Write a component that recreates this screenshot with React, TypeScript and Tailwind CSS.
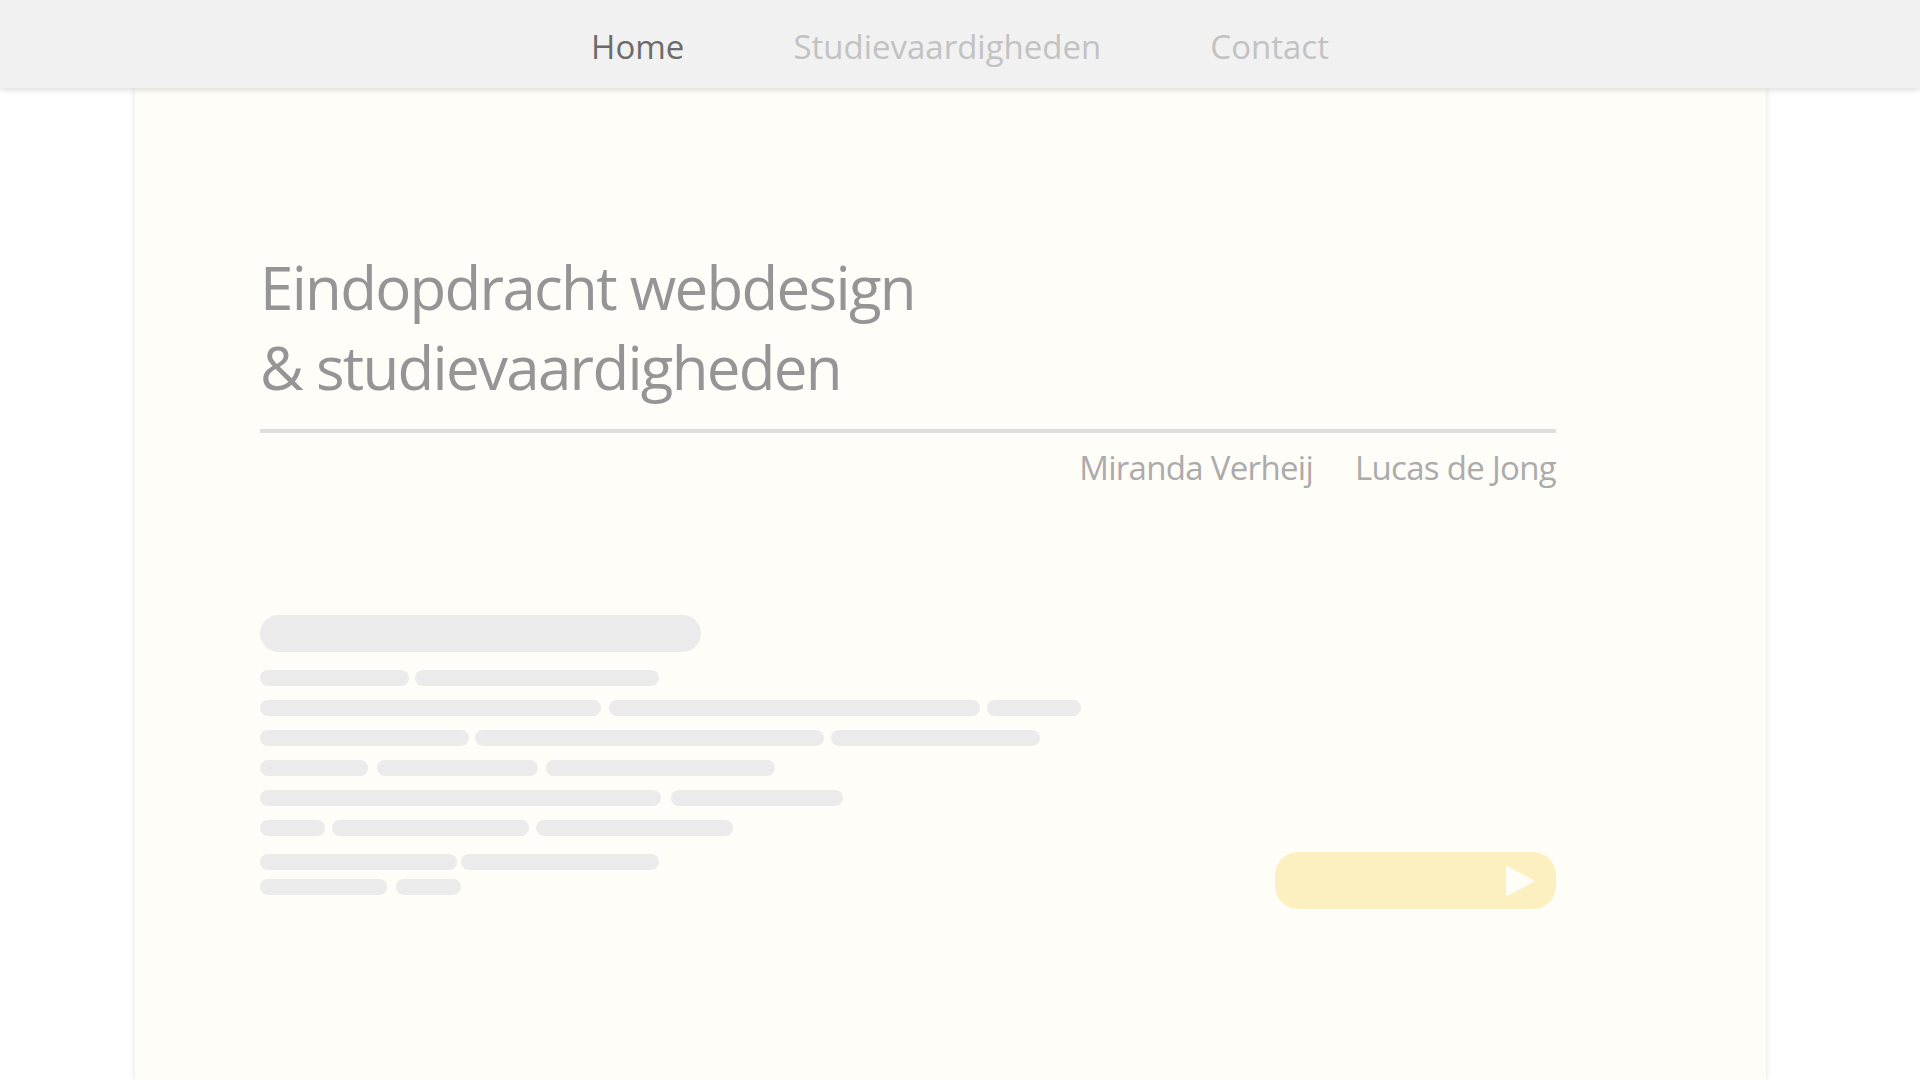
const rows: { w: number[]; g: number[] }[] = [
  { w: [149, 244], g: [6] },
  { w: [341, 371, 94], g: [8, 7] },
  { w: [209, 349, 209], g: [6, 7] },
  { w: [108, 161, 229], g: [9, 8] },
  { w: [401, 172], g: [10] },
  { w: [65, 197, 197], g: [7, 7] },
];

const rows2: { w: number[]; g: number[] }[] = [
  { w: [197, 198], g: [4] },
  { w: [127, 65], g: [9] },
];

function SkeletonRow({ w, g }: { w: number[]; g: number[] }) {
  return (
    <div className="flex">
      {w.map((width, i) => (
        <div
          key={i}
          className="h-[16px] rounded-full bg-[#ebebec]"
          style={{ width, marginLeft: i === 0 ? 0 : g[i - 1] }}
        />
      ))}
    </div>
  );
}

export default function App() {
  return (
    <div className="min-h-screen bg-white font-['Open_Sans','Noto_Sans',sans-serif]">
      <nav className="relative z-10 flex h-[88px] items-center justify-center gap-[109px] bg-[#f1f1f1] pt-[5px] text-[33px] leading-[40px] shadow-[0_2px_6px_rgba(0,0,0,0.14)]">
        <a className="text-[#6b6b6b]">Home</a>
        <a className="text-[#c2c2c2]">Studievaardigheden</a>
        <a className="text-[#c2c2c2]">Contact</a>
      </nav>

      <main className="ml-[135px] min-h-[992px] w-[1631px] bg-[#fffdf8] pl-[125px] pt-[159px] shadow-[0_0_6px_rgba(0,0,0,0.13)]">
        <div className="w-[1296px]">
          <h1 className="text-[60px] font-normal leading-[80px] tracking-[-1.7px] text-[#959595]">
            Eindopdracht webdesign
            <br />& studievaardigheden
          </h1>
          <div className="mt-[22px] h-[4px] bg-[#dddddd]" />
          <div className="mt-[15px] flex justify-end gap-[42px] text-[33px] leading-[40px] tracking-[-0.7px] text-[#ababab]">
            <span>Miranda Verheij</span>
            <span>Lucas de Jong</span>
          </div>

          <div className="mt-[127px] flex items-end justify-between">
            <div className="pb-[14px]">
              <div className="h-[37px] w-[441px] rounded-full bg-[#ebebec]" />
              <div className="mt-[18px] flex flex-col gap-[14px]">
                {rows.map((r, i) => (
                  <SkeletonRow key={i} w={r.w} g={r.g} />
                ))}
              </div>
              <div className="mt-[18px] flex flex-col gap-[9px]">
                {rows2.map((r, i) => (
                  <SkeletonRow key={i} w={r.w} g={r.g} />
                ))}
              </div>
            </div>

            <button className="flex h-[57px] w-[281px] items-center justify-end rounded-[23px] bg-[#fdf0c0] pr-[21px]">
              <svg width="30" height="34" viewBox="0 0 30 34">
                <path
                  d="M3 2.5 Q1 1.5 1 4 L1 30 Q1 32.5 3 31.5 L28 18.2 Q29.5 17 28 15.8 Z"
                  fill="#fffdf8"
                />
              </svg>
            </button>
          </div>
        </div>
      </main>
    </div>
  );
}
